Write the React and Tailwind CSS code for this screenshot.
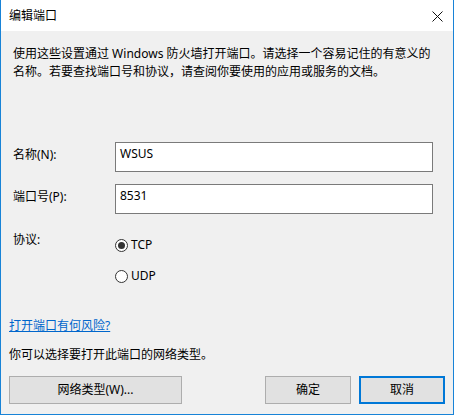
export default function App() {
  const font = { fontFamily: '"Noto Sans", "Noto Sans CJK SC", sans-serif' };
  return (
    <div
      className="w-[454px] h-[415px] border border-t-0 border-[#1883d7] bg-[#f0f0f0] flex flex-col text-[12px] text-black box-border overflow-hidden"
      style={font}
    >
      {/* Title bar */}
      <div className="h-[31px] bg-white flex items-center justify-between pl-[8px] pr-[10px] shrink-0">
        <span className="leading-[18px] text-[12px] pt-[1px]">编辑端口</span>
        <svg width="11" height="11" viewBox="0 0 11 11" className="mt-[1px]">
          <path d="M0.5 0.5 L10.5 10.5 M10.5 0.5 L0.5 10.5" stroke="#111" strokeWidth="1" fill="none" />
        </svg>
      </div>

      {/* Body */}
      <div className="flex flex-col flex-1 pl-[12px] pr-[19px] pt-[14px]">
        <p className="leading-[18px]">
          使用这些设置通过 Windows 防火墙打开端口。请选择一个容易记住的有意义的
          <br />
          名称。若要查找端口号和协议，请查阅你要使用的应用或服务的文档。
        </p>

        <div className="flex items-start mt-[61px]">
          <div className="w-[102px] pt-[4px] leading-[18px]">名称(N):</div>
          <div className="w-[318px] h-[30px] border border-[#7a7a7a] bg-white pl-[4px] pt-[2px] leading-[18px]">
            WSUS
          </div>
        </div>

        <div className="flex items-start mt-[12px]">
          <div className="w-[102px] pt-[4px] leading-[18px]">端口号(P):</div>
          <div className="w-[318px] h-[30px] border border-[#7a7a7a] bg-white pl-[4px] pt-[2px] leading-[18px]">
            8531
          </div>
        </div>

        <div className="flex items-start mt-[17px]">
          <div className="w-[102px] leading-[18px]">协议:</div>
          <div className="flex flex-col gap-[13px] pt-[5px]">
            <div className="flex items-center h-[18px]">
              <span className="w-[13px] h-[13px] rounded-full border border-[#333] bg-white flex items-center justify-center">
                <span className="w-[7px] h-[7px] rounded-full bg-[#333]" />
              </span>
              <span className="ml-[3px] leading-[18px]">TCP</span>
            </div>
            <div className="flex items-center h-[18px]">
              <span className="w-[13px] h-[13px] rounded-full border border-[#333] bg-white" />
              <span className="ml-[3px] leading-[18px]">UDP</span>
            </div>
          </div>
        </div>
      </div>

      <div className="flex flex-col px-[8px] pb-[10px]">
        <a className="leading-[18px] text-[#0066cc] underline self-start">打开端口有何风险?</a>
        <p className="leading-[18px] mt-[11px]">你可以选择要打开此端口的网络类型。</p>
        <div className="flex items-center mt-[12px]">
          <button className="w-[173px] h-[28px] bg-[#e1e1e1] border border-[#adadad] leading-[18px]">
            网络类型(W)...
          </button>
          <div className="flex-1" />
          <button className="w-[86px] h-[28px] bg-[#e1e1e1] border border-[#adadad] leading-[18px]">
            确定
          </button>
          <button className="w-[86px] h-[28px] ml-[8px] bg-[#e1e1e1] border-2 border-[#0078d7] leading-[18px]">
            取消
          </button>
        </div>
      </div>
    </div>
  );
}
